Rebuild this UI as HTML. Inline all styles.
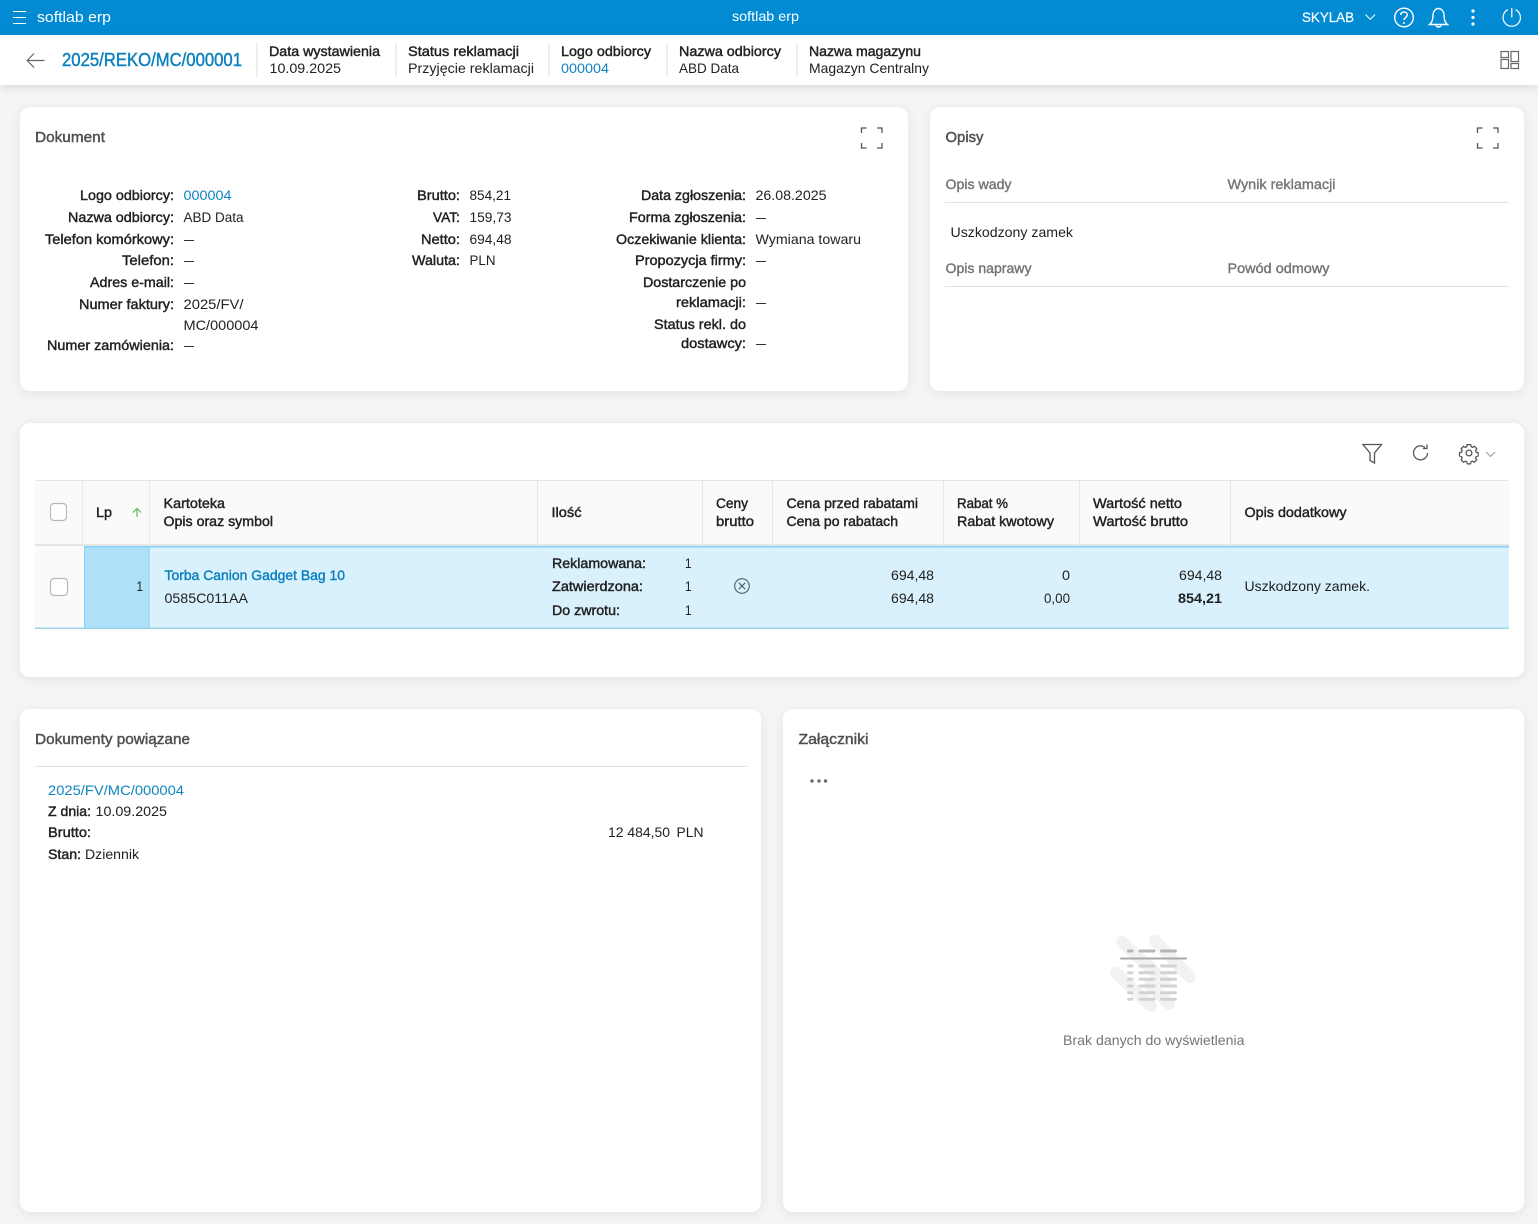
<!DOCTYPE html>
<html lang="pl"><head><meta charset="utf-8"><title>softlab erp</title>
<style>
html,body{margin:0;padding:0;width:1538px;height:1224px;overflow:hidden;background:#f5f5f5}
.top{position:absolute;left:0;top:0;width:1538px;height:35px;background:#028bd3}
.hdr{position:absolute;left:0;top:35px;width:1538px;height:50px;background:#fff;box-shadow:0 2px 10px rgba(0,0,0,.12)}
.c{position:absolute;background:#fff;border-radius:10px;box-shadow:0 2px 12px rgba(0,0,0,.08)}
svg{position:absolute;left:0;top:0}
text{font-family:"Liberation Sans",sans-serif;font-size:14px;fill:#212121}
.m{stroke:#212121;stroke-width:.42px}
.t{fill:#4f4f4f;stroke:#4f4f4f;stroke-width:.42px;font-size:14.5px}
.l{fill:#757575;stroke:#757575;stroke-width:.38px}
.b{fill:#0f84c2}
.bm{fill:#0a80bd;stroke:#0a80bd;stroke-width:.4px}
.w{fill:#fff}
.i{fill:none;stroke:#555;stroke-width:1.3}
.wi{fill:none;stroke:#fff;stroke-width:1.4}
</style></head><body>
<div class="top"></div><div class="hdr"></div>
<div class="c" style="left:20px;top:107px;width:888px;height:284px"></div>
<div class="c" style="left:930px;top:107px;width:594px;height:284px"></div>
<div class="c" style="left:20px;top:423px;width:1504px;height:254px"></div>
<div class="c" style="left:20px;top:709px;width:741px;height:503px"></div>
<div class="c" style="left:783px;top:709px;width:741px;height:503px"></div>
<svg width="1538" height="1224" viewBox="0 0 1538 1224">
<!-- top bar -->
<path d="M13 11.500h13M13 17.500h13M13 23.500h13" fill="none" stroke="#fff" stroke-width="1"/>
<text class="w" x="37" y="22" style="font-size:15px" textLength="74" lengthAdjust="spacingAndGlyphs">softlab erp</text>
<text class="w" x="732" y="21" textLength="67" lengthAdjust="spacingAndGlyphs">softlab erp</text>
<text class="w" x="1302" y="22" textLength="52" lengthAdjust="spacingAndGlyphs" style="stroke:#fff;stroke-width:.2px">SKYLAB</text>
<path d="M1365.500 14.500l4.800 4.800 4.800-4.800" fill="none" stroke="#fff" stroke-width="1"/>
<circle class="wi" cx="1404" cy="17.500" r="9.300"/>
<path class="wi" d="M1400.700 15c.2-2 1.500-3 3.300-3 2 0 3.300 1.300 3.300 2.900 0 2.400-3.300 2.600-3.300 5.100"/>
<circle cx="1404" cy="23" r="1" fill="#fff"/>
<path class="wi" d="M1429.500 24.500c2-1.500 3.500-4 3.500-9 0-4 2.500-7 5.500-7s5.500 3 5.500 7c0 5 1.500 7.500 3.500 9z"/>
<path class="wi" d="M1436 25.500c.4 1 1.400 1.500 2.500 1.500s2.100-.5 2.500-1.500"/>
<circle cx="1473" cy="11" r="1.600" fill="#fff"/><circle cx="1473" cy="17.500" r="1.600" fill="#fff"/><circle cx="1473" cy="24" r="1.600" fill="#fff"/>
<path class="wi" d="M1507.900 9.700a8.700 8.700 0 1 0 7.700 0M1511.800 8v9.500" style="stroke-width:1.200"/>
<!-- header -->
<path d="M27.500 60.500h17M34 53.500l-6.800 7 6.800 7" fill="none" stroke="#666" stroke-width="1.200"/>
<text class="bm" x="62" y="66" style="font-size:18px" textLength="180" lengthAdjust="spacingAndGlyphs">2025/REKO/MC/000001</text>
<g fill="#eee"><rect x="256" y="43" width="2" height="34"/><rect x="395" y="43" width="2" height="34"/><rect x="548" y="43" width="2" height="34"/><rect x="666" y="43" width="2" height="34"/><rect x="796" y="43" width="2" height="34"/></g>
<text class="m" x="269" y="56" textLength="111" lengthAdjust="spacingAndGlyphs">Data wystawienia</text>
<text x="269.500" y="73" textLength="71.500" lengthAdjust="spacingAndGlyphs">10.09.2025</text>
<text class="m" x="408" y="56" textLength="111" lengthAdjust="spacingAndGlyphs">Status reklamacji</text>
<text x="408" y="73" textLength="126" lengthAdjust="spacingAndGlyphs">Przyjęcie reklamacji</text>
<text class="m" x="561" y="56" textLength="90" lengthAdjust="spacingAndGlyphs">Logo odbiorcy</text>
<text class="b" x="561" y="73" textLength="48" lengthAdjust="spacingAndGlyphs">000004</text>
<text class="m" x="679" y="56" textLength="102" lengthAdjust="spacingAndGlyphs">Nazwa odbiorcy</text>
<text x="679" y="73" textLength="60" lengthAdjust="spacingAndGlyphs">ABD Data</text>
<text class="m" x="809" y="56" textLength="112" lengthAdjust="spacingAndGlyphs">Nazwa magazynu</text>
<text x="809" y="73" textLength="120" lengthAdjust="spacingAndGlyphs">Magazyn Centralny</text>
<g fill="none" stroke="#666" stroke-width="1.200"><rect x="1501" y="51.500" width="7.500" height="6"/><rect x="1501" y="59.500" width="7.500" height="9"/><rect x="1511" y="51.500" width="7.500" height="10"/><rect x="1511" y="63.500" width="7.500" height="5"/></g>
<!-- Dokument -->
<text class="t" x="35" y="142" textLength="70" lengthAdjust="spacingAndGlyphs">Dokument</text>
<path class="i" d="M861.500 133v-5h5M877 128h5v5M861.500 143v5h5M877 148h5v-5"/>
<text class="t" x="945.500" y="142" textLength="38" lengthAdjust="spacingAndGlyphs">Opisy</text>
<path class="i" d="M1477.500 133v-5h5M1493 128h5v5M1477.500 143v5h5M1493 148h5v-5"/>

<text class="m" x="80" y="200" textLength="94" lengthAdjust="spacingAndGlyphs">Logo odbiorcy:</text>
<text class="b" x="183.500" y="200" textLength="48" lengthAdjust="spacingAndGlyphs">000004</text>
<text class="m" x="68" y="222" textLength="106" lengthAdjust="spacingAndGlyphs">Nazwa odbiorcy:</text>
<text x="183.500" y="222" textLength="60" lengthAdjust="spacingAndGlyphs">ABD Data</text>
<text class="m" x="45" y="244" textLength="129" lengthAdjust="spacingAndGlyphs">Telefon komórkowy:</text>
<text x="184" y="244" textLength="10" lengthAdjust="spacingAndGlyphs">—</text>
<text class="m" x="122" y="265" textLength="52" lengthAdjust="spacingAndGlyphs">Telefon:</text>
<text x="184" y="265" textLength="10" lengthAdjust="spacingAndGlyphs">—</text>
<text class="m" x="90" y="287" textLength="84" lengthAdjust="spacingAndGlyphs">Adres e-mail:</text>
<text x="184" y="287" textLength="10" lengthAdjust="spacingAndGlyphs">—</text>
<text class="m" x="79" y="309" textLength="95" lengthAdjust="spacingAndGlyphs">Numer faktury:</text>
<text x="183.500" y="309" textLength="60" lengthAdjust="spacingAndGlyphs">2025/FV/</text>
<text x="183.500" y="330" textLength="75" lengthAdjust="spacingAndGlyphs">MC/000004</text>
<text class="m" x="47" y="350" textLength="127" lengthAdjust="spacingAndGlyphs">Numer zamówienia:</text>
<text x="184" y="350" textLength="10" lengthAdjust="spacingAndGlyphs">—</text>

<text class="m" x="417" y="200" textLength="43" lengthAdjust="spacingAndGlyphs">Brutto:</text>
<text x="469.500" y="200" textLength="41.500" lengthAdjust="spacingAndGlyphs">854,21</text>
<text class="m" x="433" y="222" textLength="27" lengthAdjust="spacingAndGlyphs">VAT:</text>
<text x="469.500" y="222" textLength="42" lengthAdjust="spacingAndGlyphs">159,73</text>
<text class="m" x="421" y="244" textLength="39" lengthAdjust="spacingAndGlyphs">Netto:</text>
<text x="469.500" y="244" textLength="42" lengthAdjust="spacingAndGlyphs">694,48</text>
<text class="m" x="412" y="265" textLength="48" lengthAdjust="spacingAndGlyphs">Waluta:</text>
<text x="469.500" y="265" textLength="26" lengthAdjust="spacingAndGlyphs">PLN</text>

<text class="m" x="641" y="200" textLength="105" lengthAdjust="spacingAndGlyphs">Data zgłoszenia:</text>
<text x="755.500" y="200" textLength="71" lengthAdjust="spacingAndGlyphs">26.08.2025</text>
<text class="m" x="629" y="222" textLength="117" lengthAdjust="spacingAndGlyphs">Forma zgłoszenia:</text>
<text x="756" y="222" textLength="10" lengthAdjust="spacingAndGlyphs">—</text>
<text class="m" x="616" y="244" textLength="130" lengthAdjust="spacingAndGlyphs">Oczekiwanie klienta:</text>
<text x="755.500" y="244" textLength="105.500" lengthAdjust="spacingAndGlyphs">Wymiana towaru</text>
<text class="m" x="635" y="265" textLength="111" lengthAdjust="spacingAndGlyphs">Propozycja firmy:</text>
<text x="756" y="265" textLength="10" lengthAdjust="spacingAndGlyphs">—</text>
<text class="m" x="643" y="287" textLength="103" lengthAdjust="spacingAndGlyphs">Dostarczenie po</text>
<text class="m" x="676" y="307" textLength="70" lengthAdjust="spacingAndGlyphs">reklamacji:</text>
<text x="756" y="307" textLength="10" lengthAdjust="spacingAndGlyphs">—</text>
<text class="m" x="654" y="329" textLength="92" lengthAdjust="spacingAndGlyphs">Status rekl. do</text>
<text class="m" x="681" y="348" textLength="65" lengthAdjust="spacingAndGlyphs">dostawcy:</text>
<text x="756" y="348" textLength="10" lengthAdjust="spacingAndGlyphs">—</text>

<!-- Opisy -->
<text class="l" x="945.500" y="189" textLength="66" lengthAdjust="spacingAndGlyphs">Opis wady</text>
<text class="l" x="1227.500" y="189" textLength="108" lengthAdjust="spacingAndGlyphs">Wynik reklamacji</text>
<rect x="945" y="202" width="564" height="1" fill="#e2e2e2"/>
<text x="950.500" y="237" textLength="122.500" lengthAdjust="spacingAndGlyphs">Uszkodzony zamek</text>
<text class="l" x="945.500" y="273" textLength="86" lengthAdjust="spacingAndGlyphs">Opis naprawy</text>
<text class="l" x="1227.500" y="273" textLength="102" lengthAdjust="spacingAndGlyphs">Powód odmowy</text>
<rect x="945" y="286" width="564" height="1" fill="#e2e2e2"/>

<!-- table toolbar -->
<path class="i" d="M1363 444.500h18.500l-7 8.500v10l-4.500-2.500v-7.500z"/>
<path class="i" d="M1427.500 453a7 7 0 1 1-2.500-5.500M1427 444.500v4h-4"/>
<g transform="translate(1469 453) scale(.84) translate(-1469 -453.500)"><path class="i" style="stroke-width:1.500" d="M1466.500 443.500h4.500l.6 2.500 1.700.8 2.300-1.300 2.700 3-1.400 2.200.5 1.700 2.500.8v3.800l-2.500.8-.6 1.700 1.400 2.200-2.900 2.800-2.200-1.300-1.700.7-.6 2.500h-3.800l-.6-2.500-1.800-.7-2.200 1.300-2.800-2.800 1.300-2.200-.7-1.700-2.500-.8v-3.800l2.500-.8.7-1.700-1.300-2.200 2.800-3 2.200 1.300 1.800-.8z"/></g>
<circle class="i" cx="1469" cy="453" r="2.900"/>
<path d="M1486 452l4.500 4.500 4.500-4.500" fill="none" stroke="#999" stroke-width="1"/>

<!-- table -->
<rect x="35" y="480" width="1474" height="65" fill="#fafafa"/>
<rect x="35" y="480" width="1474" height="1" fill="#e6e6e6"/>
<rect x="35" y="544" width="1474" height="2" fill="#e4e4e4"/>
<g fill="#e8e8e8"><rect x="82" y="481" width="1" height="64"/><rect x="149" y="481" width="1" height="64"/><rect x="537" y="481" width="1" height="64"/><rect x="702" y="481" width="1" height="64"/><rect x="772" y="481" width="1" height="64"/><rect x="943" y="481" width="1" height="64"/><rect x="1079" y="481" width="1" height="64"/><rect x="1230" y="481" width="1" height="64"/></g>
<rect x="50.500" y="503.500" width="16" height="17" rx="3.500" fill="#fff" stroke="#b8b8b8" stroke-width="1.200"/>
<text class="m" x="96" y="517" textLength="16" lengthAdjust="spacingAndGlyphs">Lp</text>
<path d="M137 517v-8.500M133 512.500l4-4 4 4" fill="none" stroke="#6dbf6d" stroke-width="1.300"/>
<text class="m" x="163.500" y="508" textLength="61.500" lengthAdjust="spacingAndGlyphs">Kartoteka</text>
<text class="m" x="163.500" y="526" textLength="109.500" lengthAdjust="spacingAndGlyphs">Opis oraz symbol</text>
<text class="m" x="551.500" y="517" textLength="30" lengthAdjust="spacingAndGlyphs">Ilość</text>
<text class="m" x="716" y="508" textLength="32" lengthAdjust="spacingAndGlyphs">Ceny</text>
<text class="m" x="716" y="526" textLength="38" lengthAdjust="spacingAndGlyphs">brutto</text>
<text class="m" x="786.500" y="508" textLength="131.500" lengthAdjust="spacingAndGlyphs">Cena przed rabatami</text>
<text class="m" x="786.500" y="526" textLength="111.500" lengthAdjust="spacingAndGlyphs">Cena po rabatach</text>
<text class="m" x="957" y="508" textLength="51" lengthAdjust="spacingAndGlyphs">Rabat %</text>
<text class="m" x="957" y="526" textLength="97" lengthAdjust="spacingAndGlyphs">Rabat kwotowy</text>
<text class="m" x="1093" y="508" textLength="89" lengthAdjust="spacingAndGlyphs">Wartość netto</text>
<text class="m" x="1093" y="526" textLength="95" lengthAdjust="spacingAndGlyphs">Wartość brutto</text>
<text class="m" x="1244.500" y="517" textLength="102" lengthAdjust="spacingAndGlyphs">Opis dodatkowy</text>

<!-- row -->
<rect x="35" y="546" width="48" height="82" fill="#fafafa"/>
<rect x="84" y="546" width="1425" height="82" fill="#d9f1fc"/>
<rect x="84" y="546" width="65" height="82" fill="#aee1f7"/>
<rect x="84" y="546" width="1425" height="1.500" fill="#82d3f5"/>
<rect x="35" y="627.500" width="1474" height="1.500" fill="#9fd3ea"/>
<rect x="84" y="546" width="1" height="82" fill="#82d3f5"/><rect x="148.500" y="546" width="1" height="82" fill="#82d3f5"/>
<rect x="50.500" y="578.500" width="17" height="17" rx="3.500" fill="#fff" stroke="#b8b8b8" stroke-width="1.200"/>
<text x="136.500" y="591" textLength="6.500" lengthAdjust="spacingAndGlyphs">1</text>
<text class="bm" x="164.500" y="580" textLength="180.500" lengthAdjust="spacingAndGlyphs">Torba Canion Gadget Bag 10</text>
<text x="164.500" y="603" textLength="83.500" lengthAdjust="spacingAndGlyphs">0585C011AA</text>
<text class="m" x="552" y="568" textLength="94" lengthAdjust="spacingAndGlyphs">Reklamowana:</text>
<text class="m" x="552" y="591" textLength="91" lengthAdjust="spacingAndGlyphs">Zatwierdzona:</text>
<text class="m" x="552" y="615" textLength="68" lengthAdjust="spacingAndGlyphs">Do zwrotu:</text>
<text x="685" y="568" textLength="6.500" lengthAdjust="spacingAndGlyphs">1</text>
<text x="685" y="591" textLength="6.500" lengthAdjust="spacingAndGlyphs">1</text>
<text x="685" y="615" textLength="6.500" lengthAdjust="spacingAndGlyphs">1</text>
<circle cx="742" cy="586" r="7.300" fill="none" stroke="#4b5f6b" stroke-width="1.100"/>
<path d="M738.800 582.800l6.400 6.400M745.200 582.800l-6.400 6.400" stroke="#4b5f6b" stroke-width="1.100"/>
<text x="891" y="580" textLength="43" lengthAdjust="spacingAndGlyphs">694,48</text>
<text x="891" y="603" textLength="43" lengthAdjust="spacingAndGlyphs">694,48</text>
<text x="1062" y="580" textLength="8" lengthAdjust="spacingAndGlyphs">0</text>
<text x="1044" y="603" textLength="26" lengthAdjust="spacingAndGlyphs">0,00</text>
<text x="1179" y="580" textLength="43" lengthAdjust="spacingAndGlyphs">694,48</text>
<text x="1178" y="603" style="font-weight:bold" textLength="44" lengthAdjust="spacingAndGlyphs">854,21</text>
<text x="1244.500" y="591" textLength="125.500" lengthAdjust="spacingAndGlyphs">Uszkodzony zamek.</text>

<!-- Dokumenty powiązane -->
<text class="t" x="35" y="744" textLength="155" lengthAdjust="spacingAndGlyphs">Dokumenty powiązane</text>
<rect x="35" y="766" width="712" height="1" fill="#e2e2e2"/>
<text class="b" x="48" y="795" textLength="136" lengthAdjust="spacingAndGlyphs">2025/FV/MC/000004</text>
<text class="m" x="48" y="816" textLength="43" lengthAdjust="spacingAndGlyphs">Z dnia:</text>
<text x="95.500" y="816" textLength="71.500" lengthAdjust="spacingAndGlyphs">10.09.2025</text>
<text class="m" x="48" y="837" textLength="43" lengthAdjust="spacingAndGlyphs">Brutto:</text>
<text x="608" y="837" textLength="62" lengthAdjust="spacingAndGlyphs">12 484,50</text>
<text x="676.500" y="837" textLength="27" lengthAdjust="spacingAndGlyphs">PLN</text>
<text class="m" x="48" y="859" textLength="33" lengthAdjust="spacingAndGlyphs">Stan:</text>
<text x="85" y="859" textLength="54" lengthAdjust="spacingAndGlyphs">Dziennik</text>

<!-- Zalaczniki -->
<text class="t" x="798.500" y="744" textLength="70" lengthAdjust="spacingAndGlyphs">Załączniki</text>
<circle cx="812" cy="781" r="1.700" fill="#6b6b6b"/><circle cx="819" cy="781" r="1.700" fill="#6b6b6b"/><circle cx="825.500" cy="781" r="1.700" fill="#6b6b6b"/>

<g fill="none" stroke="#f2f2f2" stroke-width="12" stroke-linecap="round">
<path d="M1122 942L1165 982"/><path d="M1155 941L1190 977"/><path d="M1116 973L1151 1006"/><path d="M1150 985L1169 1004"/>
</g>
<g fill="#b5b5b5">
<rect x="1127" y="949.500" width="6.500" height="3" rx="1.500"/><rect x="1138.500" y="949.500" width="17" height="3" rx="1.500"/><rect x="1160" y="949.500" width="17" height="3" rx="1.500"/>
<rect x="1120" y="957.500" width="67" height="2" rx="1" fill="#a8a8a8"/>
</g>
<g fill="#d2d2d2">
<rect x="1127" y="964.500" width="6.500" height="3" rx="1.500"/><rect x="1138.500" y="964.500" width="17" height="3" rx="1.500"/><rect x="1160" y="964.500" width="17" height="3" rx="1.500"/>
<rect x="1127" y="971.200" width="6.500" height="3" rx="1.500"/><rect x="1138.500" y="971.200" width="17" height="3" rx="1.500"/><rect x="1160" y="971.200" width="17" height="3" rx="1.500"/>
<rect x="1127" y="977.800" width="6.500" height="3" rx="1.500"/><rect x="1138.500" y="977.800" width="17" height="3" rx="1.500"/><rect x="1160" y="977.800" width="17" height="3" rx="1.500"/>
<rect x="1127" y="984.500" width="6.500" height="3" rx="1.500"/><rect x="1138.500" y="984.500" width="17" height="3" rx="1.500"/><rect x="1160" y="984.500" width="17" height="3" rx="1.500"/>
<rect x="1127" y="991.200" width="6.500" height="3" rx="1.500"/><rect x="1138.500" y="991.200" width="17" height="3" rx="1.500"/><rect x="1160" y="991.200" width="17" height="3" rx="1.500"/>
<rect x="1127" y="997.800" width="6.500" height="3" rx="1.500"/><rect x="1138.500" y="997.800" width="17" height="3" rx="1.500"/><rect x="1160" y="997.800" width="17" height="3" rx="1.500"/>
</g>
<text x="1063" y="1045" style="fill:#757575" textLength="181.500" lengthAdjust="spacingAndGlyphs">Brak danych do wyświetlenia</text>
</svg>
</body></html>
